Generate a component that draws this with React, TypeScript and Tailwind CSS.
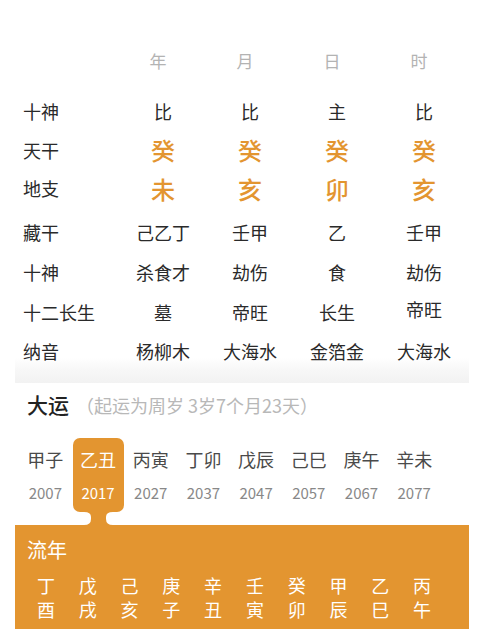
import React from "react";

const FONT = { fontFamily: '"Noto Sans CJK SC", "Noto Sans", sans-serif' };

const HEADERS = ["年", "月", "日", "时"];

type Row = { label: string; values: string[]; gold?: boolean; h: string };

const ROWS: Row[] = [
  { label: "十神", values: ["比", "比", "主", "比"], h: "h-[40px]" },
  { label: "天干", values: ["癸", "癸", "癸", "癸"], gold: true, h: "h-[38px]" },
  { label: "地支", values: ["未", "亥", "卯", "亥"], gold: true, h: "h-[39px]" },
  { label: "藏干", values: ["己乙丁", "壬甲", "乙", "壬甲"], h: "h-[44px] pt-[4px]" },
  { label: "十神", values: ["杀食才", "劫伤", "食", "劫伤"], h: "h-[40px]" },
  { label: "十二长生", values: ["墓", "帝旺", "长生", "帝旺"], h: "h-[40px]" },
];

const DAYUN = [
  { gz: "甲子", year: "2007" },
  { gz: "乙丑", year: "2017", active: true },
  { gz: "丙寅", year: "2027" },
  { gz: "丁卯", year: "2037" },
  { gz: "戊辰", year: "2047" },
  { gz: "己巳", year: "2057" },
  { gz: "庚午", year: "2067" },
  { gz: "辛未", year: "2077" },
];

const LIUNIAN = [
  ["丁", "酉"],
  ["戊", "戌"],
  ["己", "亥"],
  ["庚", "子"],
  ["辛", "丑"],
  ["壬", "寅"],
  ["癸", "卯"],
  ["甲", "辰"],
  ["乙", "巳"],
  ["丙", "午"],
];

// little bone-shaped neck joining the active 大运 tab to the 流年 panel
function Neck(): React.ReactElement {
  return (
    <svg
      className="absolute left-0 top-[67px] z-10"
      width="51"
      height="22"
      viewBox="0 0 51 22"
    >
      <path
        d="M11,6 H40 V7 Q33,7 33,12 V14 Q33,20 40,20 V22 H11 V20 Q18,20 18,14 V12 Q18,7 11,7 Z"
        fill="#e39530"
      />
    </svg>
  );
}

export default function App(): React.ReactElement {
  return (
    <div className="w-[490px] h-[629px] bg-white overflow-hidden" style={FONT}>
      <div className="mx-[15px] w-[454px] pt-[41px]">
        {/* header */}
        <div className="flex h-[40px] items-center">
          <div className="w-[104.5px]" />
          {HEADERS.map((h) => (
            <div key={h} className="w-[87px] pr-[10px] text-center text-[17px] text-[#b3b3b3]">
              {h}
            </div>
          ))}
        </div>
        <div className="h-[10px]" />
        {ROWS.map((r, i) => (
          <div key={i} className={`flex items-center ${r.h}`}>
            <div className="w-[104.5px] pl-[8px] text-[18px] text-[#2a2a2a]">{r.label}</div>
            {r.values.map((v, j) => (
              <div
                key={j}
                className={
                  r.gold
                    ? "w-[87px] text-center text-[24px] leading-[30px] font-medium text-[#e39530]"
                    : i === 5 && j === 3
                      ? "w-[87px] -mt-[6px] text-center text-[18px] text-[#2a2a2a]"
                      : "w-[87px] text-center text-[18px] text-[#2a2a2a]"
                }
              >
                {v}
              </div>
            ))}
          </div>
        ))}
        <div className="h-[51px] bg-[linear-gradient(to_bottom,#ffffff_0%,#ffffff_50%,#f7f7f7_75%,#f2f2f2_100%)]">
          <div className="flex h-[38px] items-center">
            <div className="w-[104.5px] pl-[8px] text-[18px] text-[#2a2a2a]">纳音</div>
            {["杨柳木", "大海水", "金箔金", "大海水"].map((v, j) => (
              <div key={j} className="w-[87px] text-center text-[18px] text-[#2a2a2a]">
                {v}
              </div>
            ))}
          </div>
        </div>

        {/* 大运 */}
        <div className="flex h-[44px] items-center pl-[12px]">
          <span className="text-[21px] font-medium text-[#222]">大运</span>
          <span className="ml-[7px] text-[18px] text-[#b8b8b8]">（起运为周岁 3岁7个月23天）</span>
        </div>
        <div className="mt-[11px] flex pl-[4px]">
          {DAYUN.map((d) => (
            <div key={d.gz} className="w-[52.7px]">
              <div
                className={
                  d.active
                    ? "relative mx-auto h-[74px] w-[51px] rounded-[7px] bg-[#e39530] text-white"
                    : "mx-auto h-[74px] w-[51px] text-[#4a4a4a]"
                }
              >
                <div className="pt-[9px] h-[33px] text-center text-[18px] leading-[24px]">{d.gz}</div>
                <div
                  className={
                    d.active
                      ? "mt-[12px] text-center text-[15px] leading-[20px] text-white"
                      : "mt-[12px] text-center text-[15px] leading-[20px] text-[#888]"
                  }
                >
                  {d.year}
                </div>
                {d.active && <Neck />}
              </div>
            </div>
          ))}
        </div>

        {/* 流年 */}
        <div className="mt-[13px] h-[120px] bg-[#e39530] text-white">
          <div className="pt-[13px] pl-[12px] text-[20px] leading-[24px]">流年</div>
          <div className="mt-[11px] flex pl-[10px]">
            {LIUNIAN.map(([a, b], i) => (
              <div key={i} className="w-[41.8px] text-center text-[18px] leading-[24px]">
                <div>{a}</div>
                <div>{b}</div>
              </div>
            ))}
          </div>
        </div>
      </div>
    </div>
  );
}
